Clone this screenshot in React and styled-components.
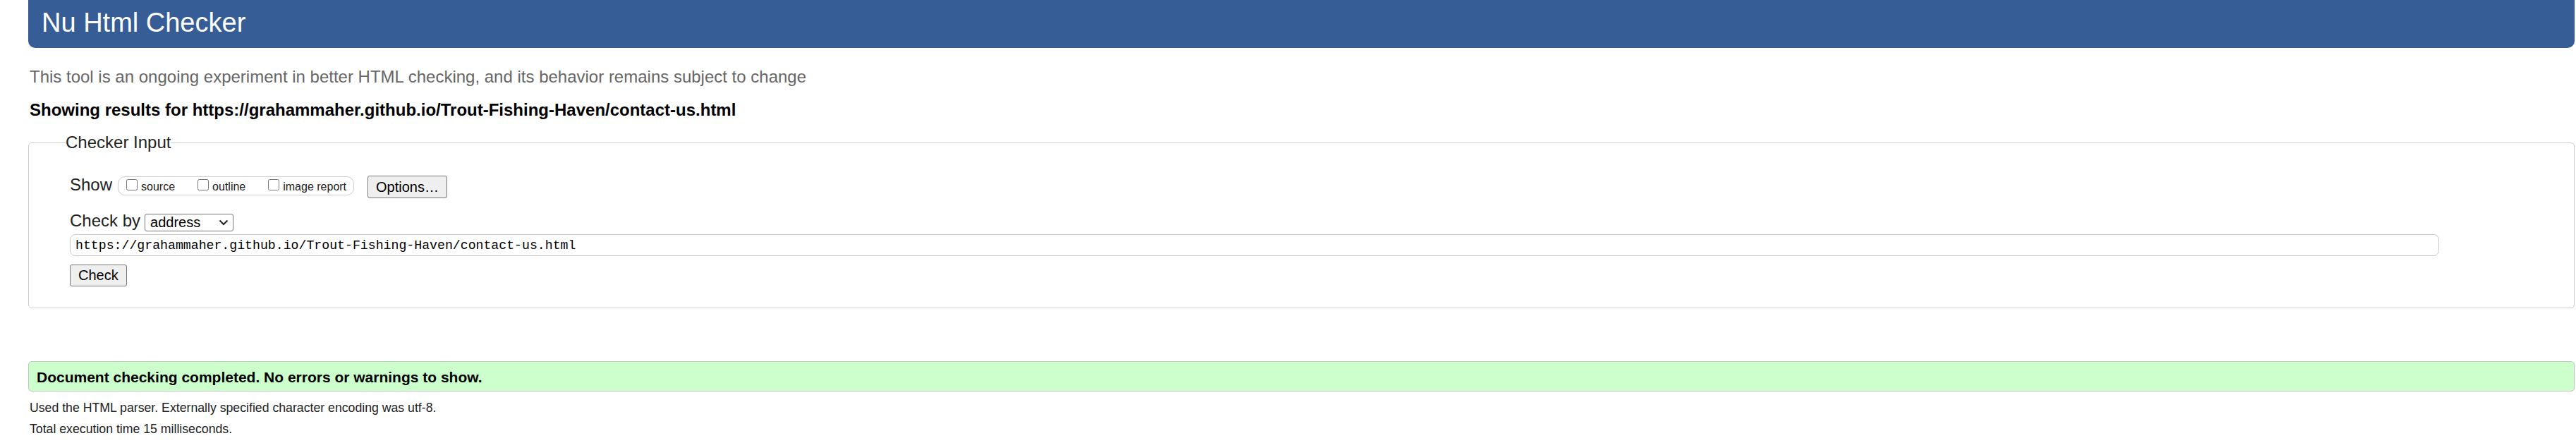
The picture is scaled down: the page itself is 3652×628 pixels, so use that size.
import React from 'react'
import styled, { createGlobalStyle } from 'styled-components'

const GlobalStyle = createGlobalStyle`
html, body {
    margin: 0;
    padding: 0;
    background: #fff;
}
body {
    font-family: "Liberation Sans", Arial, sans-serif;
    color: #222;
}
`

const Page = styled.div`
padding: 0 2px 0 40px;
`

const Title = styled.h1`
margin: 0;
height: 68px;
box-sizing: border-box;
padding: 6px 19px 0;
line-height: 52px;
font-size: 38px;
font-weight: normal;
color: #fff;
background: #365d95;
border-radius: 0 0 10px 10px;
`

const Intro = styled.p`
margin: 27px 0 0 2px;
font-size: 24px;
line-height: 28px;
color: #666;
`

const ResultsFor = styled.p`
margin: 19px 0 0 2px;
font-size: 24px;
font-weight: bold;
line-height: 28px;
color: #000;
`

const Fieldset = styled.fieldset`
margin: 18px 0 0;
padding: 0 0 30px 58px;
min-width: 0;
border: 1px solid #cccccc;
border-radius: 5px;
`

const Legend = styled.legend`
margin-left: -6px;
padding: 0;
font-size: 24px;
line-height: 28px;
color: #222;
`

const Row = styled.div`
display: flex;
align-items: ${p => p.$align || 'center'};
gap: ${p => p.$gap || 0}px;
margin-top: ${p => p.$top || 0}px;
`

const FieldLabel = styled.span`
font-size: 24px;
line-height: ${p => p.$lh || 28}px;
padding-bottom: ${p => p.$lift || 0}px;
color: #222;
`

const OptionGroup = styled.div`
display: flex;
align-items: baseline;
gap: 32px;
height: 27px;
box-sizing: border-box;
margin: 0 19px 3px 8px;
padding: 3px 10px 0 11px;
border: 1px solid #cccccc;
border-radius: 10px;
`

const Option = styled.label`
display: flex;
align-items: baseline;
gap: 5px;
font-size: 16px;
line-height: 18px;
color: #222;
input {
    width: 16px;
    height: 16px;
    margin: 0 0 1px 0;
}
`

const Button = styled.button`
height: ${p => p.$h || 32}px;
padding: 0 11px;
font-family: "Liberation Sans", Arial, sans-serif;
font-size: 20px;
color: #000;
background: #efefef;
border: 1px solid #767676;
border-radius: 3px;
`

const SelectBox = styled.div`
display: flex;
align-items: center;
justify-content: space-between;
width: 126px;
height: 25px;
box-sizing: border-box;
padding: 0 6px 0 7px;
font-size: 20px;
color: #000;
border: 1px solid #767676;
border-radius: 3px;
`

const UrlInput = styled.input`
display: block;
width: calc(100% - 191px);
height: 31px;
box-sizing: border-box;
margin-top: 4px;
padding: 0 7px;
font-family: "Liberation Mono", "Courier New", monospace;
font-size: 18.2px;
color: #000;
border: 1px solid #c8c8c8;
border-radius: 8px;
outline: none;
`

const CheckRow = styled.div`
margin-top: 12px;
`

const Success = styled.div`
margin-top: 75px;
height: 43px;
box-sizing: border-box;
padding: 2px 11px 0;
line-height: 40px;
font-size: 21px;
font-weight: bold;
color: #000;
background: #ccffcc;
border: 1px solid #c4c4c4;
border-radius: 5px;
`

const Note = styled.p`
margin: ${p => p.$top}px 0 0 2px;
font-size: 17.7px;
line-height: 20px;
color: #222;
`

const Chevron = () => (
    <svg width="14" height="9" viewBox="0 0 14 9">
        <polyline points="1.5,1.5 7,7 12.5,1.5" fill="none" stroke="#222" strokeWidth="2" />
    </svg>
)

const options = ['source', 'outline', 'image report']

const App = () => (
    <Page>
        <GlobalStyle />
        <Title>Nu Html Checker</Title>
        <Intro>This tool is an ongoing experiment in better HTML checking, and its behavior remains subject to change</Intro>
        <ResultsFor>Showing results for https://grahammaher.github.io/Trout-Fishing-Haven/contact-us.html</ResultsFor>
        <Fieldset>
            <Legend>Checker Input</Legend>
            <Row $top={32}>
                <FieldLabel $lift={6}>Show</FieldLabel>
                <OptionGroup>
                    {options.map(o => (
                        <Option key={o}>
                            <input type="checkbox" />
                            {o}
                        </Option>
                    ))}
                </OptionGroup>
                <Button>Options…</Button>
            </Row>
            <Row $top={21} $align="flex-start" $gap={6}>
                <FieldLabel $lh={20}>Check by</FieldLabel>
                <SelectBox>
                    address
                    <Chevron />
                </SelectBox>
            </Row>
            <UrlInput readOnly value="https://grahammaher.github.io/Trout-Fishing-Haven/contact-us.html" />
            <CheckRow>
                <Button $h={31}>Check</Button>
            </CheckRow>
        </Fieldset>
        <Success>Document checking completed. No errors or warnings to show.</Success>
        <Note $top={13}>Used the HTML parser. Externally specified character encoding was utf-8.</Note>
        <Note $top={10}>Total execution time 15 milliseconds.</Note>
    </Page>
)

export default App
